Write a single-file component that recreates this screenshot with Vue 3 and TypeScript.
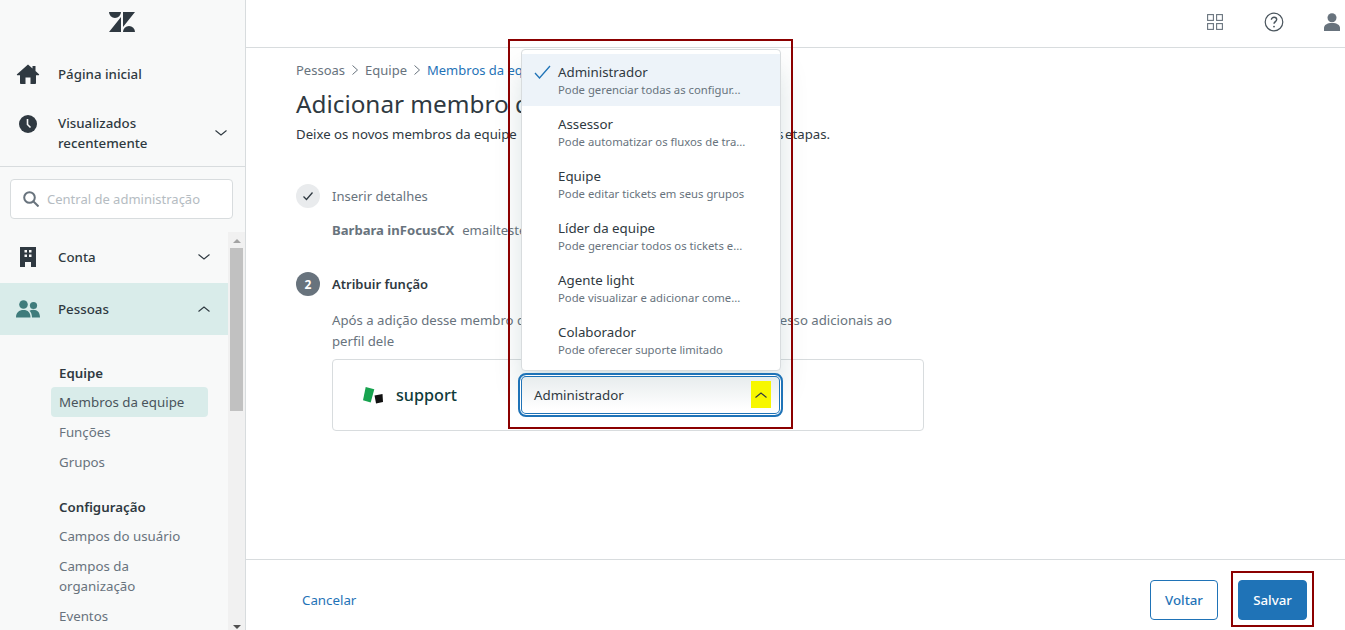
<script setup lang="ts">
const roles = [
  { name: 'Administrador', desc: 'Pode gerenciar todas as configur...', active: true },
  { name: 'Assessor', desc: 'Pode automatizar os fluxos de tra...', active: false },
  { name: 'Equipe', desc: 'Pode editar tickets em seus grupos', active: false },
  { name: 'Líder da equipe', desc: 'Pode gerenciar todos os tickets e...', active: false },
  { name: 'Agente light', desc: 'Pode visualizar e adicionar come...', active: false },
  { name: 'Colaborador', desc: 'Pode oferecer suporte limitado', active: false },
]
</script>

<template>
  <div class="app">
    <aside class="sidebar">
      <div class="logo-row">
        <svg width="26" height="20" viewBox="0 0 26 20" fill="#2f3941">
          <path d="M0 0h12a6 6 0 0 1-12 0zM12 5v15H0zM14 15V0h12zM14 20a6 6 0 0 1 12 0z" />
        </svg>
      </div>
      <div class="nav-item home">
        <svg class="nav-icon" width="24" height="20" viewBox="0 0 24 20" fill="#2f3941">
          <path d="M12 .5 1 10.2c-.4.5 0 1.1.6 1.1H4V19c0 .5.4 1 1 1h4.500v-6.500h5V20H19c.6 0 1-.5 1-1v-7.700h2.400c.6 0 1-.6.6-1.100L19.500 7V2h-3v2.400z" />
        </svg>
        <span>Página inicial</span>
      </div>
      <div class="nav-item recent">
        <svg class="nav-icon" width="24" height="18" viewBox="0 0 24 18">
          <circle cx="12" cy="9" r="9" fill="#2f3941" />
          <path d="M11.500 4v5.500l3 3" fill="none" stroke="#f8f9f9" stroke-width="1.600" />
        </svg>
        <span class="recent-label">Visualizados<br />recentemente</span>
        <svg class="chev" width="12" height="12" viewBox="0 0 12 12"><path d="M.5 3.500 6 8l5.500-4.500" /></svg>
      </div>
      <div class="search-wrap">
        <div class="search">
          <svg width="16" height="16" viewBox="0 0 16 16" fill="none" stroke="#68737d" stroke-width="2">
            <circle cx="6.500" cy="6.500" r="5.300" /><path d="m10.500 10.500 5 5" />
          </svg>
          <span>Central de administração</span>
        </div>
      </div>
      <div class="scroll-area">
        <div class="scroll-content">
          <div class="nav-item conta">
            <svg class="nav-icon" width="24" height="20" viewBox="0 0 24 20" fill="#2f3941">
              <path fill-rule="evenodd" d="M4 0h16v20h-5v-5h-6v5H4zM8.500 3v2.500h2.500V3zM13 3v2.500h2.500V3zM8.500 7.500V10h2.500V7.500zM13 7.500V10h2.500V7.500z" />
            </svg>
            <span>Conta</span>
            <svg class="chev" width="12" height="12" viewBox="0 0 12 12"><path d="M.5 3.500 6 8l5.500-4.500" /></svg>
          </div>
          <div class="nav-item pessoas">
            <svg class="nav-icon" width="24" height="18" viewBox="0 0 24 18" fill="#3f7c7c">
              <circle cx="7.500" cy="4.500" r="4.300" /><circle cx="17.500" cy="5.500" r="3.600" />
              <path d="M0 17.500C0 12.500 3 10 7.500 10s7 2.500 7 7.500zM16 17.500c0-3-1-5.500-2.500-6.800 1-.6 2.400-.9 4-.9 4 0 6.500 2.800 6.500 7.700z" />
            </svg>
            <span>Pessoas</span>
            <svg class="chev" width="12" height="12" viewBox="0 0 12 12"><path d="M.5 8.500 6 4l5.500 4.500" /></svg>
          </div>
          <div class="sub">
            <div class="sub-title equipe">Equipe</div>
            <div class="sub-link current">Membros da equipe</div>
            <div class="sub-link">Funções</div>
            <div class="sub-link">Grupos</div>
            <div class="sub-title config">Configuração</div>
            <div class="sub-link">Campos do usuário</div>
            <div class="sub-link double">Campos da<br />organização</div>
            <div class="sub-link">Eventos</div>
          </div>
        </div>
        <div class="track">
          <span class="arrow up"></span>
          <span class="thumb"></span>
          <span class="arrow down"></span>
        </div>
      </div>
    </aside>

    <main class="main">
      <header class="topbar">
        <svg width="16" height="16" viewBox="0 0 16 16" fill="none" stroke="#68737d" stroke-width="1.100">
          <rect x=".6" y=".6" width="5.800" height="5.800" /><rect x="9.600" y=".6" width="5.800" height="5.800" />
          <rect x=".6" y="9.600" width="5.800" height="5.800" /><rect x="9.600" y="9.600" width="5.800" height="5.800" />
        </svg>
        <svg class="help" width="20" height="20" viewBox="0 0 20 20" fill="none" stroke="#49545c" stroke-width="1.200">
          <circle cx="10" cy="10" r="8.800" />
          <path d="M7.400 7.800c0-1.600 1.200-2.600 2.700-2.600s2.600 1 2.600 2.300c0 2-2.700 2.200-2.700 4.300" stroke-width="1.400" />
          <circle cx="10" cy="14.600" r=".9" fill="#49545c" stroke="none" />
        </svg>
        <svg class="user" width="16" height="18" viewBox="0 0 16 18" fill="#68737d">
          <circle cx="8" cy="4.700" r="4.500" />
          <path d="M0 18v-3c0-3 3-5 8-5s8 2 8 5v3z" />
        </svg>
      </header>

      <section class="content">
        <nav class="crumbs">
          <span>Pessoas</span>
          <svg width="12" height="12" viewBox="0 0 12 12"><path d="m3.500 1.500 5 4.500-5 4.500" /></svg>
          <span>Equipe</span>
          <svg width="12" height="12" viewBox="0 0 12 12"><path d="m3.500 1.500 5 4.500-5 4.500" /></svg>
          <span class="crumb-link">Membros da eq</span>
        </nav>
        <h1>Adicionar membro d</h1>
        <p class="lead">
          <span>Deixe os novos membros da equipe</span>
          <span class="lead-tail">s etapas.</span>
        </p>

        <div class="step done">
          <span class="badge">
            <svg width="12" height="12" viewBox="0 0 12 12" fill="none" stroke="#2f3941" stroke-width="1.300"><path d="m1.500 6.500 3 3 6-7" /></svg>
          </span>
          <span>Inserir detalhes</span>
        </div>
        <div class="user-line"><b>Barbara inFocusCX</b><span>emailteste</span></div>

        <div class="step current-step">
          <span class="badge">2</span>
          <span>Atribuir função</span>
        </div>
        <div class="para">
          <div class="para-line">
            <span>Após a adição desse membro d</span>
            <span>esso adicionais ao</span>
          </div>
          <div>perfil dele</div>
        </div>

        <div class="card">
          <div class="brand">
            <svg width="20" height="17" viewBox="0 0 20 17">
              <path d="M2.700 0 11.300 2.300 7.700 15.600 0 13.300z" fill="#17a34f" />
              <path d="M11.500 8.500 19.500 7 20 15 13 16.500z" fill="#111" />
            </svg>
            <span>support</span>
          </div>
        </div>
      </section>

      <footer class="footer">
        <span class="cancel">Cancelar</span>
        <div class="actions">
          <button class="btn ghost">Voltar</button>
          <button class="btn primary">Salvar</button>
        </div>
      </footer>
    </main>

    <div class="menu">
      <div v-for="r in roles" :key="r.name" class="option" :class="{ on: r.active }">
        <svg v-if="r.active" class="tick" width="17" height="14" viewBox="0 0 17 14" fill="none" stroke="#1f73b7" stroke-width="1.300"><path d="m1 8 4.500 5L16 1" /></svg>
        <div class="opt-name">{{ r.name }}</div>
        <div class="opt-desc">{{ r.desc }}</div>
      </div>
    </div>
    <div class="select">
      <span>Administrador</span>
      <span class="marker">
        <svg width="12" height="12" viewBox="0 0 12 12"><path d="M.5 8.500 6 4l5.500 4.500" /></svg>
      </span>
    </div>
    <div class="mark mark-menu"></div>
    <div class="mark mark-save"></div>
  </div>
</template>

<style>
html, body { margin: 0; background: #fff; }
</style>

<style scoped>
.app {
  position: relative;
  display: flex;
  width: 1345px;
  height: 630px;
  overflow: hidden;
  background: #fff;
  color: #2f3941;
  font-family: "Noto Sans", "Liberation Sans", sans-serif;
  font-size: 13.3px;
}
.sidebar {
  flex: 0 0 245px;
  display: flex;
  flex-direction: column;
  background: #f8f9f9;
  border-right: 1px solid #d8dcde;
}
.logo-row { height: 48px; flex: none; display: flex; justify-content: center; align-items: flex-start; padding: 12px 2px 0 0; box-sizing: border-box; }
.nav-item { display: flex; align-items: center; font-weight: 500; line-height: 20px; }
.nav-icon { flex: none; margin: 0 18px 0 16px; }
.chev { margin-left: auto; fill: none; stroke: #2f3941; stroke-width: 1.100; }
.home { height: 52px; }
.recent { height: 66px; border-bottom: 1px solid #d8dcde; }
.recent .nav-icon { margin-bottom: 18px; }
.recent .chev { margin-right: 18px; }
.search-wrap { padding: 12px 12px 13px 10px; flex: none; }
.search {
  height: 40px;
  box-sizing: border-box;
  display: flex;
  align-items: center;
  gap: 8px;
  padding-left: 12px;
  background: #fff;
  border: 1px solid #d8dcde;
  border-radius: 4px;
  color: #b5bcc2;
  font-size: 13px;
}
.scroll-area { flex: 1; display: flex; min-height: 0; }
.scroll-content { width: 228px; flex: none; }
.conta { height: 51px; padding-bottom: 2px; box-sizing: border-box; }
.conta .chev, .pessoas .chev { margin-right: 18px; }
.pessoas { height: 52px; background: #d9ecea; }
.sub { padding: 28px 20px 0 51px; }
.sub-title { font-weight: 600; padding-left: 8px; line-height: 20px; color: #2f3941; }
.sub-title.equipe { margin-bottom: 4px; }
.sub-title.config { margin-top: 20px; margin-bottom: 4px; }
.sub-link { padding: 0 8px; height: 30px; line-height: 30px; color: #68737d; border-radius: 4px; white-space: nowrap; }
.sub-link.double { line-height: 20px; padding-top: 5px; padding-bottom: 5px; height: 40px; }
.sub-link.current { background: #d9ecea; color: #49545c; }
.track { flex: 1; background: #f1f1f1; display: flex; flex-direction: column; align-items: center; }
.thumb { width: 13px; height: 163px; background: #c1c1c1; margin-top: 5px; }
.arrow { width: 0; height: 0; border-left: 4px solid transparent; border-right: 4px solid transparent; }
.arrow.up { border-bottom: 4px solid #a3a3a3; margin-top: 7px; }
.arrow.down { border-top: 4px solid #505050; margin-top: auto; margin-bottom: 1px; }

.main { flex: 1; display: flex; flex-direction: column; min-width: 0; }
.topbar {
  height: 48px;
  flex: none;
  box-sizing: border-box;
  border-bottom: 1px solid #d8dcde;
  display: flex;
  align-items: center;
  justify-content: flex-end;
  padding: 0 5px 3px 0;
}
.help { margin-left: 41px; }
.user { margin-left: 40px; }
.content { flex: 1; padding: 12px 0 0 50px; min-height: 0; }
.crumbs { display: flex; align-items: center; gap: 4px; height: 20px; white-space: nowrap; color: #68737d; font-size: 13px; }
.crumbs svg { flex: none; fill: none; stroke: #68737d; stroke-width: 1; }
.crumb-link { color: #1f73b7; }
h1 { margin: 7px 0 0; font-size: 24.3px; font-weight: 400; line-height: 34px; color: #2f3941; white-space: nowrap; }
.lead { margin: 3px 0 0; width: 534px; display: flex; justify-content: space-between; line-height: 20px; white-space: nowrap; font-size: 13.2px; }
.lead-tail { word-spacing: -2px; }
.step { display: flex; align-items: center; gap: 12px; height: 24px; font-size: 13px; }
.done { margin-top: 40px; color: #68737d; }
.badge { width: 24px; height: 24px; border-radius: 50%; display: flex; align-items: center; justify-content: center; }
.done .badge { background: #e9ebed; }
.user-line { margin: 12px 0 0 36px; white-space: nowrap; height: 20px; line-height: 20px; color: #68737d; display: flex; gap: 8px; font-size: 13.1px; }
.user-line b { font-weight: 700; }
.current-step { margin-top: 32px; font-weight: 600; }
.current-step .badge { background: #68737d; color: #fff; font-size: 12px; font-weight: 700; }
.para { margin: 14px 0 0 36px; width: 560px; line-height: 21px; color: #68737d; font-size: 13.2px; }
.para-line { display: flex; justify-content: space-between; white-space: nowrap; }
.card { margin: 7px 0 0 36px; width: 592px; height: 72px; box-sizing: border-box; border: 1px solid #d8dcde; border-radius: 4px; display: flex; align-items: center; padding-left: 30px; }
.brand { display: flex; align-items: center; gap: 13px; color: #0f3b3a; font-size: 16.2px; font-weight: 500; }
.footer { flex: none; height: 71px; box-sizing: border-box; border-top: 1px solid #d8dcde; display: flex; align-items: center; justify-content: space-between; padding: 10px 38px 0 56px; }
.cancel { color: #1f73b7; }
.actions { display: flex; gap: 20px; }
.btn { height: 40px; border-radius: 4px; font: inherit; font-weight: 500; padding: 0; cursor: pointer; }
.ghost { width: 68px; background: #fff; border: 1px solid #1f73b7; color: #1f73b7; }
.primary { width: 69px; background: #1f73b7; border: 1px solid #1f73b7; color: #fff; }

.menu {
  position: absolute;
  left: 521px;
  top: 49px;
  width: 260px;
  height: 322px;
  box-sizing: border-box;
  padding-top: 4px;
  background: #fff;
  border: 1px solid #d8dcde;
  border-radius: 4px;
  box-shadow: 0 20px 28px rgba(4, 68, 77, .15);
}
.option { position: relative; height: 52px; box-sizing: border-box; padding: 8px 0 0 36px; }
.option.on { background: #edf3f9; }
.tick { position: absolute; left: 12px; top: 11px; }
.opt-name { line-height: 20px; }
.opt-desc { font-size: 11.3px; line-height: 16px; color: #68737d; white-space: nowrap; }
.select {
  position: absolute;
  left: 518px;
  top: 373px;
  width: 265px;
  height: 44px;
  box-sizing: border-box;
  border: 2px solid #1f73b7;
  box-shadow: inset 0 0 0 1px #fff, inset 0 0 0 2px #1f73b7;
  border-radius: 8px;
  display: flex;
  align-items: center;
  padding: 0 0 1px 14px;
  background: linear-gradient(#e6ebec, #fff 85%);
}
.marker { margin-left: auto; margin-right: 10px; width: 20px; height: 27px; background: #f7f700; display: flex; align-items: center; justify-content: center; }
.marker svg { fill: none; stroke: #2f3941; stroke-width: 1.100; }
.mark { position: absolute; border: 2px solid #8b0000; box-sizing: border-box; pointer-events: none; }
.mark-menu { left: 508px; top: 39px; width: 285px; height: 390px; }
.mark-save { left: 1231px; top: 571px; width: 83px; height: 56px; }
</style>
